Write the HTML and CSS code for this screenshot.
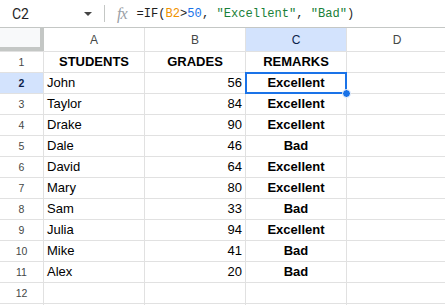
FILE: index.html
```html
<!DOCTYPE html>
<html lang="en">
<head>
    <meta charset="UTF-8">
    <title>Grades</title>
    <link rel="stylesheet" href="styles.css">
</head>
<body>

<div class="formula-bar">
    <div class="name-box">C2</div>
    <div class="dropdown"></div>
    <div class="divider"></div>
    <div class="fx">fx</div>
    <div class="formula">=IF(<span class="ref">B2</span>&gt;<span class="num">50</span>, <span class="str">"Excellent"</span>, <span class="str">"Bad"</span>)</div>
</div>

<div class="sheet">
    <div class="corner"></div>
    <div class="col-head">A</div>
    <div class="col-head">B</div>
    <div class="col-head active">C</div>
    <div class="col-head">D</div>

    <div class="row-head">1</div>
    <div class="cell center bold">STUDENTS</div>
    <div class="cell center bold">GRADES</div>
    <div class="cell center bold">REMARKS</div>
    <div class="cell"></div>

    <div class="row-head active">2</div>
    <div class="cell">John</div>
    <div class="cell right">56</div>
    <div class="cell center bold selected">Excellent<span class="handle"></span></div>
    <div class="cell"></div>

    <div class="row-head">3</div>
    <div class="cell">Taylor</div>
    <div class="cell right">84</div>
    <div class="cell center bold">Excellent</div>
    <div class="cell"></div>

    <div class="row-head">4</div>
    <div class="cell">Drake</div>
    <div class="cell right">90</div>
    <div class="cell center bold">Excellent</div>
    <div class="cell"></div>

    <div class="row-head">5</div>
    <div class="cell">Dale</div>
    <div class="cell right">46</div>
    <div class="cell center bold">Bad</div>
    <div class="cell"></div>

    <div class="row-head">6</div>
    <div class="cell">David</div>
    <div class="cell right">64</div>
    <div class="cell center bold">Excellent</div>
    <div class="cell"></div>

    <div class="row-head">7</div>
    <div class="cell">Mary</div>
    <div class="cell right">80</div>
    <div class="cell center bold">Excellent</div>
    <div class="cell"></div>

    <div class="row-head">8</div>
    <div class="cell">Sam</div>
    <div class="cell right">33</div>
    <div class="cell center bold">Bad</div>
    <div class="cell"></div>

    <div class="row-head">9</div>
    <div class="cell">Julia</div>
    <div class="cell right">94</div>
    <div class="cell center bold">Excellent</div>
    <div class="cell"></div>

    <div class="row-head">10</div>
    <div class="cell">Mike</div>
    <div class="cell right">41</div>
    <div class="cell center bold">Bad</div>
    <div class="cell"></div>

    <div class="row-head">11</div>
    <div class="cell">Alex</div>
    <div class="cell right">20</div>
    <div class="cell center bold">Bad</div>
    <div class="cell"></div>

    <div class="row-head">12</div>
    <div class="cell"></div>
    <div class="cell"></div>
    <div class="cell"></div>
    <div class="cell"></div>

    <!-- baris 13 hanya terlihat tepinya -->
    <div class="row-head"></div>
    <div class="cell"></div>
    <div class="cell"></div>
    <div class="cell"></div>
    <div class="cell"></div>
</div>

</body>
</html>
```

FILE: styles.css
```css
/* Dasar halaman */
body {
    margin: 0;
    background: #fff;
    font-family: 'Liberation Sans', Arial, sans-serif;
    color: #000;
    overflow: hidden;
}

/* Bar formula di atas */
.formula-bar {
    display: flex;
    align-items: center;
    height: 27px;
    border-bottom: 1px solid #c4c7c5;
}

.name-box {
    width: 72px;
    padding-left: 12px;
    font-family: Roboto, 'Liberation Sans', sans-serif;
    font-size: 14px;
    color: #1f1f1f;
}

.dropdown {
    width: 0;
    height: 0;
    border-left: 4px solid transparent;
    border-right: 4px solid transparent;
    border-top: 4px solid #444;
}

.divider {
    width: 1px;
    height: 17px;
    background: #c4c7c5;
    margin-left: 12px;
}

.fx {
    font-family: 'Liberation Serif', serif;
    font-style: italic;
    font-size: 16px;
    color: #9aa0a6;
    margin-left: 12px;
    letter-spacing: -1px;
}

.formula {
    font-family: 'Liberation Mono', monospace;
    font-size: 12.1px;
    color: #1f1f1f;
    margin-left: 10px;
}

.ref { color: #f09300; }
.num { color: #1a73e8; }
.str { color: #188038; }

/* Grid spreadsheet */
.sheet {
    display: grid;
    grid-template-columns: 43px 100px 100px 100px 100px;
    grid-template-rows: 23px;
    grid-auto-rows: 20px;
    gap: 1px;
    background: #e1e1e1;
}

.corner {
    background: #f8f9fa;
    border-right: 4px solid #c4c7c5;
    border-bottom: 4px solid #c4c7c5;
    margin-right: -1px;
}

.col-head {
    background: #fff;
    display: flex;
    align-items: center;
    justify-content: center;
    font-size: 12px;
    color: #444746;
}

.row-head {
    background: #fff;
    display: flex;
    align-items: center;
    justify-content: center;
    font-size: 10.5px;
    color: #444746;
}

.col-head.active, .row-head.active {
    background: #d3e3fd;
    color: #0b1f4b;
}

.row-head.active {
    font-weight: bold;
}

.cell {
    background: #fff;
    font-size: 13px;
    line-height: 20px;
    padding: 0 3px;
    white-space: nowrap;
    position: relative;
}

.center { text-align: center; }
.right { text-align: right; }
.bold { font-weight: bold; }

.selected {
    box-shadow: 0 0 0 1px #1a73e8, inset 0 0 0 1px #1a73e8;
    z-index: 1;
}

.handle {
    position: absolute;
    right: -5px;
    bottom: -5px;
    width: 7px;
    height: 7px;
    border-radius: 50%;
    background: #1a73e8;
    border: 1px solid #fff;
}
```
